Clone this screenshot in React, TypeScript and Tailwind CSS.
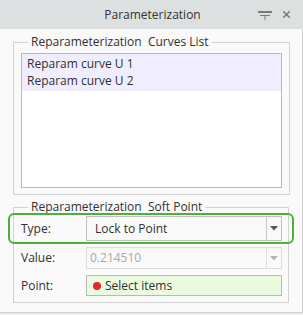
import { X } from 'lucide-react'

const font = { fontFamily: '"Open Sans", "Segoe UI", sans-serif' }

function PinIcon() {
  return (
    <svg width="14" height="10" viewBox="0 0 14 10" className="text-[#7a7a7a]">
      <rect x="0" y="1" width="14" height="2" fill="currentColor" />
      <rect x="2" y="5" width="10" height="1" fill="currentColor" />
      <rect x="6.5" y="5" width="1" height="5" fill="currentColor" />
    </svg>
  )
}

function GroupBox({ title, className, children }: { title: string; className?: string; children: React.ReactNode }) {
  return (
    <div className={'relative border border-[#d3d3d3] ' + (className ?? '')}>
      <span className="absolute left-[14px] top-[-10px] bg-[#fafafa] px-[3px] text-[12px] leading-[18px] text-[#303030] whitespace-pre">
        {title}
      </span>
      {children}
    </div>
  )
}

function Arrow({ color }: { color: string }) {
  return (
    <svg width="8" height="5" viewBox="0 0 8 5">
      <path d="M0 0 H8 L4 4.5 Z" fill={color} />
    </svg>
  )
}

export default function App() {
  return (
    <div className="w-[303px] h-[315px] bg-[#e9ebeb] text-[#333]" style={font}>
      <div className="h-[29px] bg-[#dde0e0] relative flex items-center justify-center">
        <span className="text-[12px] text-[#333] pl-[2px]">Parameterization</span>
        <div className="absolute right-[11px] top-[9px] flex items-center gap-[9px]">
          <PinIcon />
          <X size={11} strokeWidth={3.2} className="text-[#777]" />
        </div>
      </div>
      <div className="h-[284px] w-[303px] bg-[#fafafa] border-r border-b border-[#cfcfcf] pl-[13px] pr-[13px] pt-[13px]">
        <GroupBox title="Reparameterization  Curves List" className="h-[153px] w-[277px] pt-[10px] pl-[7px]">
          <div className="w-[261px] h-[135px] border border-[#b9b9b9] bg-white">
            <div className="bg-[#f0eefe] pt-[1px] pb-[2px] pl-[5px] text-[12px] leading-[17px] text-[#303030]">
              <div>Reparam curve U 1</div>
              <div>Reparam curve U 2</div>
            </div>
          </div>
        </GroupBox>
        <GroupBox title="Reparameterization  Soft Point" className="mt-[12px] h-[96px] w-[276px] pt-[8px] pl-[7px]">
          <div className="flex flex-col text-[12px] text-[#303030]">
            <div className="relative flex items-center h-[25px]">
              <div className="absolute left-[-13px] right-[-6px] top-[-3px] bottom-[-3px] border-2 border-[#4eae3e] rounded-[6px]" />
              <span className="w-[65px]">Type:</span>
              <div className="flex h-[25px] w-[196px] items-stretch border border-[#c2c2c2] bg-[#f9f9f9]">
                <span className="flex-1 flex items-center pl-[8px]">Lock to Point</span>
                <span className="w-[15px] border-l border-[#c8c8c8] flex items-center justify-center">
                  <Arrow color="#555" />
                </span>
              </div>
            </div>
            <div className="flex items-center h-[22px] mt-[6px]">
              <span className="w-[65px]">Value:</span>
              <div className="flex h-[22px] w-[196px] items-stretch border border-[#dcdcdc] bg-[#fafafa]">
                <span className="flex-1 flex items-center pl-[3px] text-[#a8a8a8]">0.214510</span>
                <span className="w-[15px] border-l border-[#e0e0e0] flex items-center justify-center">
                  <Arrow color="#b5b5b5" />
                </span>
              </div>
            </div>
            <div className="flex items-center h-[21px] mt-[6px]">
              <span className="w-[65px]">Point:</span>
              <div className="flex h-[21px] w-[196px] items-center border border-[#b8b8b8] bg-[#eafbe0] pl-[6px] gap-[4px]">
                <span className="w-[8px] h-[8px] rounded-full bg-[#e8262a]" />
                <span>Select items</span>
              </div>
            </div>
          </div>
        </GroupBox>
      </div>
    </div>
  )
}
